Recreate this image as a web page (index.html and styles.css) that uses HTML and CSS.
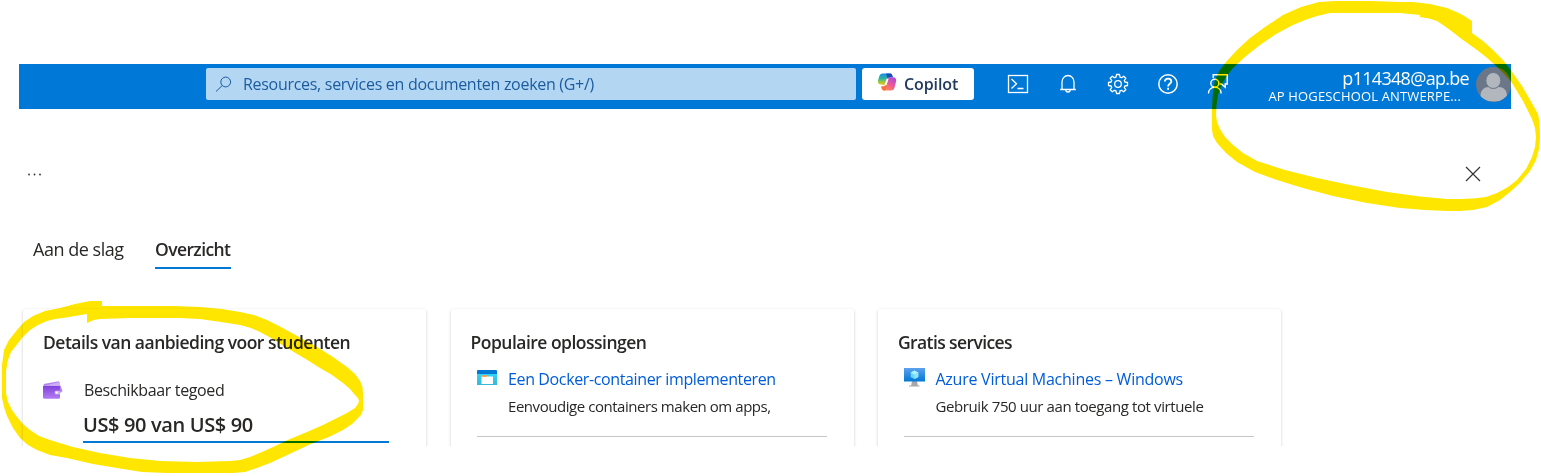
FILE: index.html
```html
<!DOCTYPE html>
<html lang="nl">
<head>
<meta charset="utf-8">
<title>Azure Education</title>
<link rel="stylesheet" href="styles.css">
</head>
<body>
<div class="page">
  <header class="topbar">
    <div class="search">
      <svg class="search-icon" width="18" height="18" viewBox="0 0 18 18" fill="none" stroke="#1b5c9e" stroke-width="1"><circle cx="10.700" cy="7" r="4.900"/><path d="M7.300 10.500 1 16.500"/></svg>
      <span class="t search-text">Resources, services en documenten zoeken (G+/)</span>
    </div>
    <button class="copilot">
      <svg width="20" height="20" viewBox="0 0 20 20">
        <defs>
          <linearGradient id="ca" x1="0" y1="0" x2="0" y2="1"><stop offset="0" stop-color="#1a8be8"/><stop offset=".45" stop-color="#2fb5a5"/><stop offset=".75" stop-color="#a4c83a"/><stop offset="1" stop-color="#f2c11c"/></linearGradient>
          <linearGradient id="cb" x1=".8" y1="0" x2=".2" y2="1"><stop offset="0" stop-color="#a64be0"/><stop offset=".5" stop-color="#ee5a93"/><stop offset="1" stop-color="#ff9254"/></linearGradient>
        </defs>
        <path d="M13.2 1.5c1.2 0 1.8.8 2.1 1.9l.5 1.8h-2.1c-1.2 0-1.8.6-2.1 1.8L10 13H7.500l-3.500-.4C1.800 12.600.3 11 1 8.600l1.200-4.100C2.800 2.500 4 1.500 5.800 1.500z" fill="url(#ca)"/>
        <path d="M9 1.500h4.200c1.200 0 1.800.8 2.100 1.900l.5 1.800h-2.100L10.500 6z" fill="#1c4fb4"/>
        <path d="M7 18.500c-1.200 0-1.900-.8-2.200-1.900L4.200 14.500h2c1.200 0 1.800-.6 2.200-1.800L10.300 6.800c.4-1.100 1-1.600 2.100-1.600h3.800c2.200 0 3.500 1.700 2.900 4l-1.300 5.500c-.6 2.700-1.900 3.800-3.700 3.800z" fill="url(#cb)"/>
        <path d="M4.200 14.500h2c1.200 0 1.800-.6 2.200-1.800l.8-2.500.7 4.800-2 3.500H7c-1.200 0-1.900-.8-2.200-1.900z" fill="#f4703f"/>
        <path d="M9.600 6.700h2l-2.100 6.500h-2z" fill="#fff"/>
      </svg>
      <span class="t copilot-text">Copilot</span>
    </button>
    <nav class="tools">
      <svg width="22" height="22" viewBox="0 0 22 22" fill="none" stroke="#fff" stroke-width="1.3"><rect x="1.500" y="2.500" width="19" height="17"/><path d="M4.500 6l5 4.700-5 4.800M10.500 15.500h6"/></svg>
      <svg width="22" height="22" viewBox="0 0 22 22" fill="none" stroke="#fff" stroke-width="1.3"><path d="M3.200 16.500h15.600M5 16.300V9a6 6.500 0 0 1 12 0v7.300M8.800 16.800a2.200 2.200 0 0 0 4.400 0"/></svg>
      <svg width="22" height="22" viewBox="0 0 22 22" fill="none" stroke="#fff" stroke-width="1.3"><path stroke-linejoin="round" d="M9.500 1.500h3l.5 2.600 1.500.6 2.200-1.500 2.100 2.100-1.500 2.200.6 1.500 2.600.5v3l-2.600.5-.6 1.500 1.500 2.200-2.100 2.100-2.200-1.500-1.500.6-.5 2.600h-3L9 17.900l-1.500-.6-2.200 1.500-2.100-2.100 1.500-2.200-.6-1.500-2.600-.5v-3L4.100 9l.6-1.500-1.500-2.200 2.100-2.100 2.200 1.500L9 4.100z"/><circle cx="11" cy="11" r="3.300"/></svg>
      <svg width="22" height="22" viewBox="0 0 22 22" fill="none" stroke="#fff"><circle cx="11" cy="11" r="9.200" stroke-width="1.500"/><path stroke-width="1.800" d="M7.900 8.600c0-1.900 1.300-3 3.200-3s3.200 1.100 3.200 2.800c0 2.300-3.200 2.500-3.200 5M11.100 14.700v2"/></svg>
      <svg width="22" height="22" viewBox="0 0 22 22" fill="none" stroke="#fff" stroke-width="1.400"><path d="M6.200 5V1.700h14v9.300h-2v3.200L14.500 11h-2"/><circle cx="7.800" cy="10.200" r="4"/><path d="M1.500 20.500c0-3.800 2.700-6.200 6.300-6.200s6.300 2.400 6.300 6.200"/></svg>
    </nav>
    <div class="account">
      <span class="t mail">p114348@ap.be</span>
      <span class="t tenant">AP HOGESCHOOL ANTWERPE...</span>
    </div>
    <svg class="avatar" width="35" height="35" viewBox="0 0 35 35"><clipPath id="av"><circle cx="17.500" cy="17.500" r="17.500"/></clipPath><g clip-path="url(#av)"><rect width="35" height="35" fill="#6b7788"/><path d="M4.500 29c0-6 4-9 8-9 2 1.700 8 1.700 10 0 5 0 8.500 3 8.500 9v2q-13 7-26.500 0z" fill="#b1b7bd"/><ellipse cx="17.300" cy="13.500" rx="7.500" ry="8" fill="#b1b7bd" stroke="#6b7788"/></g></svg>
  </header>

  <div class="blade-head">
    <svg width="16" height="4" viewBox="0 0 16 4" fill="#333"><circle cx="2" cy="2.500" r=".9"/><circle cx="7.500" cy="2.500" r=".9"/><circle cx="13" cy="2.500" r=".9"/></svg>
    <svg width="16" height="16" viewBox="0 0 16 16" stroke="#333" stroke-width="1.200"><path d="M1 1l14 14M15 1L1 15"/></svg>
  </div>

  <div class="tabs">
    <span class="tab"><span class="t tab-start">Aan de slag</span></span>
    <span class="tab active"><span class="t tab-over">Overzicht</span></span>
  </div>

  <main class="cards">
    <section class="card">
      <h2><span class="t h-details">Details van aanbieding voor studenten</span></h2>
      <div class="credit">
        <svg class="wallet" width="20" height="18" viewBox="0 0 20 18"><defs><linearGradient id="w" x1="0" y1="0" x2="0" y2="1"><stop offset="0" stop-color="#7a3bd8"/><stop offset="1" stop-color="#b37cf3"/></linearGradient></defs><path d="M.5 3 16 .2l1 3.300 2.500 6.500-2.500 2L3 8z" fill="#b184ef"/><path d="M2 4.500 17 1v4z" fill="#cfb0f8"/><path d="M0 3.500c0 1 .5 1.500 1.500 1.500H17v11.500c0 .8-.5 1.200-1.200 1.200H1.200C.4 17.700 0 17.200 0 16.500z" fill="url(#w)"/><path d="M17 9.800h-4.300c-1.400 0-1.400 3.700 0 3.700H17z" fill="#cbb0f6"/><path d="M12.500 10.600h2.300v2h-2.300z" fill="#fff"/></svg>
        <div class="credit-body">
          <span class="t label">Beschikbaar tegoed</span>
          <span class="t amount">US$ 90 van US$ 90</span>
          <div class="meter"></div>
        </div>
      </div>
    </section>
    <section class="card">
      <h2><span class="t h-pop">Populaire oplossingen</span></h2>
      <div class="item">
        <svg class="item-icon" width="21" height="20" viewBox="0 0 21 20"><defs><linearGradient id="d" x1="0" y1="0" x2="0" y2="1"><stop offset="0" stop-color="#32d4f5"/><stop offset="1" stop-color="#36b8d8"/></linearGradient></defs><g transform="translate(0 1)"><path d="M0 5h20v11H0z" fill="url(#d)"/><path d="M0 2q0-1 1-1h18q1 0 1 1v3H0z" fill="#0078d4"/><path d="M4.500 6.500h5l1 1H16v7.500H4.500z" fill="#fff"/><path d="M4.500 6.300h5l.8 1.500H4.500z" fill="#f48b2a"/></g></svg>
        <div class="item-body">
          <a class="t l-docker">Een Docker-container implementeren</a>
          <span class="t d-docker">Eenvoudige containers maken om apps,</span>
        </div>
      </div>
    </section>
    <section class="card">
      <h2><span class="t h-free">Gratis services</span></h2>
      <div class="item">
        <svg class="item-icon" width="21" height="20" viewBox="0 0 21 20"><defs><linearGradient id="v" x1="0" y1="0" x2="0" y2="1"><stop offset="0" stop-color="#5ea0ef"/><stop offset="1" stop-color="#0078d4"/></linearGradient></defs><path d="M8 13h5l.8 4.500H15.500v1H5v-1h2.200z" fill="#a5a7aa"/><path d="M0 0h21v13.500H0z" fill="url(#v)"/><path d="M10.500 2.500l3.800 2v4.500l-3.800 2-3.800-2V4.500z" fill="#67d8f7"/><path d="M10.500 2.500l3.800 2-3.800 2.200-3.800-2.200z" fill="#b0f0ff"/><path d="M10.500 6.700l3.800-2.200V9l-3.800 2z" fill="#8fe5fb"/></svg>
        <div class="item-body">
          <a class="t l-vm">Azure Virtual Machines – Windows</a>
          <span class="t d-vm">Gebruik 750 uur aan toegang tot virtuele</span>
        </div>
      </div>
    </section>
  </main>
</div>
<svg class="marker" width="1541" height="476" viewBox="0 0 1541 476" fill="#ffe600" fill-rule="evenodd">
  <path d="M1319 2 1335 1 1370 1 1400 2 1413 2 1430 4 1447 8 1461 14 1472 21 1472 33 1483 41 1493 50 1502 59 1510 69 1522 86 1533 105 1538 114 1539.500 122 1540 137 1539 149 1536 160 1530 171 1520 183 1510 192 1500 200 1487 207 1473 210 1460 211 1447 211 1425 210 1400 208 1367 203 1333 196 1303 188 1277 180 1255 172 1237 162 1226 153 1217 143 1213 136 1212 130 1212 107 1213 92 1215 80 1219 71 1226 62 1237 50 1250 38 1265 27 1283 15 1301 7Z
  M1317 16 1305 20 1293 25 1276 34 1260 45 1246 56 1233 68 1226 77 1222 84 1218 95 1216.500 105 1216 115 1217 122 1220 129 1225 137 1233 145 1243 153 1257 161 1285 170 1317 178 1350 185 1387 192 1420 196.500 1447 199 1460 199 1473 198.500 1486 197 1497 193 1508 187 1517 180 1526 169 1532 157 1535 147 1536 137 1535 128 1532 119 1523 101 1512 83 1504 74 1495 65 1486 57 1477 50 1463 40 1450 30 1443 25 1437 21 1429 18.500 1420 17 1420 15 1400 13 1367 13 1330 13Z"/>
  <path d="M102 301 102 306 125 306 150 306 175 306 200 307 222 309 240 312 254 315 267 320 279 326 290 332 317 347 333 357 347 367 355 374 360 381 362.500 387 363 394 363 410 361 415 358 418 352 424 343 430 329 437 313 443 283 457 270 463 257 468 245 472 233 473 167 473 142 472 117 468 93 464 67 458 50 455 37 450 28 445 20 438 13 428 7 416 4 407 2 398 2 365 4 350 9 340 17 330 24 322 33 316 45 311 60 308 75 304 90 301Z
  M87 314 75 316 63 318 55 319 47 321 38 325 30 330 22 338 15 347 11 352 8 360 6 371 6 382 6 393 8 402 12 410 17 417 23 424 30 430 39 436 50 440 73 447 100 453 130 458 160 461 197 462 230 461 240 460 250 457 262 452 273 447 290 439 307 432 323 425 337 418 347 413 355 408 358 404 359 401 358 398 355 395 350 389 343 383 332 375 320 368 304 358 287 348 273 339 260 332 251 328 240 325 221 322 200 319 180 318 160 318 130 318 100 319 94 320 87 323Z"/>
</svg>
</body>
</html>
```
FILE: styles.css
```css
* { box-sizing: border-box; }
body { margin: 0; width: 1541px; height: 476px; overflow: hidden; background: #fff; color: #292827; font-family: "Open Sans", "Noto Sans", sans-serif; }
.page { height: 446px; padding: 64px 30px 0 19px; overflow: hidden; }
.t { display: block; white-space: nowrap; }
.topbar { display: flex; height: 45px; background: #0078d7; padding-top: 4px; padding-left: 187px; }
.search { display: flex; align-items: center; width: 650px; height: 32px; background: #b3d6f3; border-radius: 2px; padding-left: 9px; gap: 10px; color: #1b5c9e; }
.search-text { font-size: 16px; letter-spacing: -.29px; }
.copilot { display: flex; align-items: center; gap: 7px; width: 112px; height: 32px; margin-left: 6px; padding: 0 0 0 15px; border: 0; border-radius: 3px; background: #fff; color: #243a5e; font-family: inherit; }
.copilot svg { margin-top: -4px; }
.copilot-text { font-size: 16px; font-weight: 600; letter-spacing: -.1px; }
.tools { display: flex; align-items: center; gap: 28px; height: 32px; margin-left: 33px; }
.account { width: 240px; display: flex; flex-direction: column; align-items: flex-end; color: #fff; }
.mail { font-size: 18px; line-height: 20px; letter-spacing: -.7px; }
.tenant { font-size: 13px; line-height: 17px; margin-right: 8px; letter-spacing: .15px; }
.avatar { margin-left: 7px; margin-top: -1px; flex: none; }
.blade-head { display: flex; align-items: center; justify-content: space-between; height: 130px; padding: 0 30px 0 8px; }
.tabs { display: flex; gap: 32px; height: 30px; padding-left: 14px; }
.tab { height: 30px; }
.active { width: 76px; border-bottom: 2px solid #0078d4; font-weight: 600; }
.tab .t { line-height: 20px; }
.tab-start { width: 90px; font-size: 18px; letter-spacing: -.48px; }
.tab-over { font-size: 17.500px; letter-spacing: -.6px; }
.cards { display: flex; gap: 24.500px; margin-top: 40px; padding-left: 4px; }
.card { width: 403px; height: 160px; flex: none; padding: 20px; border-radius: 3px; box-shadow: 0 1px 3px rgba(0,0,0,.22); }
h2 { margin: 0; font-size: 17.500px; line-height: 26px; font-weight: 600; letter-spacing: -.51px; }
.h-free { letter-spacing: -.6px; }
.credit { display: flex; gap: 20px; padding-top: 26px; }
.credit-body { flex: none; width: 306px; margin-top: -1px; }
.label { font-size: 16px; line-height: 20px; padding-left: 1px; letter-spacing: -.36px; }
.amount { font-size: 20px; font-weight: 600; line-height: 24px; margin-top: 13px; letter-spacing: -.37px; }
.meter { height: 2px; margin-top: 4px; background: #0078d4; }
.item { display: flex; gap: 10.500px; width: 350px; height: 82px; margin-left: 6px; padding-top: 13px; border-bottom: 1px solid #c8c6c4; }
.item-body a { color: #015cda; font-size: 16px; line-height: 22px; letter-spacing: -.37px; }
.item-body .l-vm { letter-spacing: -.25px; }
.item-body span { font-size: 15px; line-height: 20px; margin-top: 6px; letter-spacing: -.45px; }
.item-body .d-vm { letter-spacing: -.4px; }
.marker { position: absolute; left: 0; top: 0; mix-blend-mode: multiply; pointer-events: none; }
```
